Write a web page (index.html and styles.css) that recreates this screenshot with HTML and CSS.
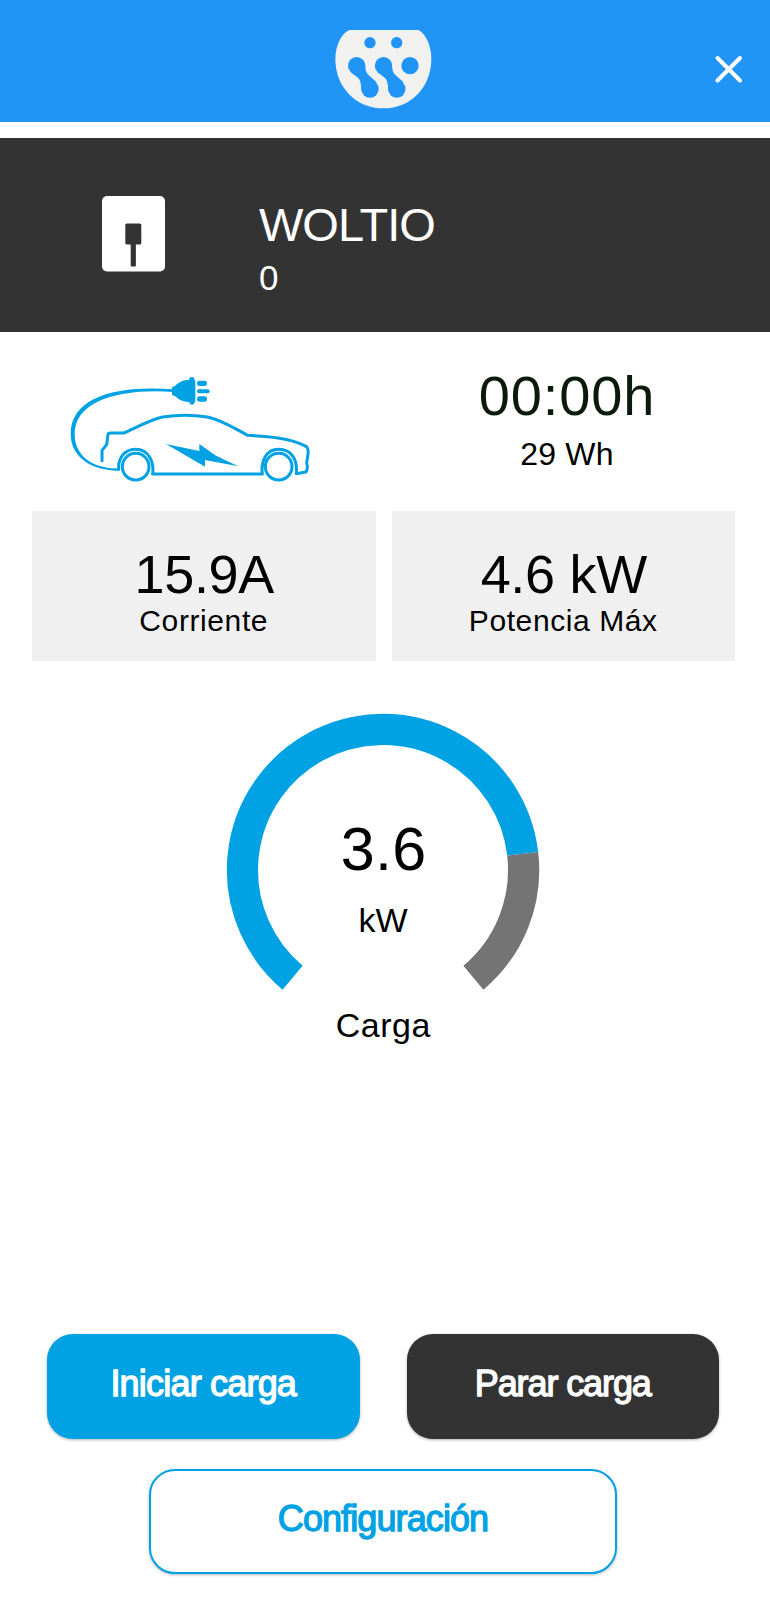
FILE: index.html
```html
<!DOCTYPE html>
<html lang="es">
<head>
    <meta charset="UTF-8">
    <meta name="viewport" content="width=device-width, initial-scale=1.0">
    <title>Woltio</title>
    <link rel="stylesheet" href="styles.css">
</head>
<body>

<header class="header">
    <svg class="logo" viewBox="0 0 450 330">
        <path fill="#f1f1f0" d="M118 60H324C346 68 364 108 364 146C364 232 302 295 220 295S76 232 76 146C76 108 94 70 118 60Z"/>
        <g fill="#2095f6">
            <circle cx="180" cy="98" r="17"/>
            <circle cx="260" cy="98" r="17"/>
            <circle cx="300" cy="167" r="26"/>
            <g id="gota">
                <circle cx="140" cy="167" r="26"/>
                <circle cx="180" cy="237" r="26"/>
                <path d="M165 160C166 180 168 189 178 197L200 217L155 244C153 220 151 209 142 202L122 187Z"/>
            </g>
            <use href="#gota" x="80.500"/>
        </g>
    </svg>
    <svg class="cerrar" viewBox="0 0 30 30">
        <path d="M3.500 4L26 26.500M26 4L3.500 26.500" stroke="#fff" stroke-width="4" stroke-linecap="round"/>
    </svg>
</header>

<section class="cargador">
    <svg class="cargador-icono" viewBox="0 0 64 76">
        <rect width="63" height="75.500" rx="5" fill="#fff"/>
        <rect x="23.300" y="27.500" width="16" height="21" rx="1.500" fill="#333"/>
        <rect x="28.700" y="47" width="5.200" height="23.500" rx="1" fill="#333"/>
    </svg>
    <div>
        <h1 class="nombre">WOLTIO</h1>
        <p class="numero">0</p>
    </div>
</section>

<section class="sesion">
    <svg class="coche" viewBox="0 0 780 390">
        <g fill="none" stroke="#00a2e4" stroke-width="9" stroke-linejoin="round" stroke-linecap="round">
            <path d="M126 287V256L140 239L144 208Q145 204 152 204H192C225 190 265 166 308 156Q375 146 442 156C485 165 520 188 563 211C620 214 690 218 738 244Q744 248 744 256C746 270 740 285 740 296C744 305 741 315 738 321L709 326C713 285 695 253 656 253C618 253 602 290 607 327H278C283 288 264 253 227 253C190 253 174 284 176 313"/>
            <circle cx="227" cy="305" r="40"/>
            <circle cx="656" cy="305" r="40"/>
        </g>
        <g fill="#00a2e4">
            <!-- cable y enchufe -->
            <path d="M340 73C180 61 32 90 32 208C32 270 86 318 178 317V310C95 313 44 270 44 208C44 106 180 70 340 81Z"/>
            <path d="M336 67L346 62C358 51 368 45 387 45C387 38 391 36 396 36C401 36 403 38 403 43L406 50V107L402 117Q396 122 390 117L387 111C368 111 358 105 346 94L336 90Z"/>
            <rect x="411" y="47" width="30" height="16" rx="8"/>
            <rect x="411" y="73" width="38" height="12" rx="6"/>
            <rect x="411" y="94" width="30" height="16" rx="8"/>
            <path d="M318 237L418 258V237L468 272L535 304L435 285V305Z"/>
        </g>
    </svg>
    <div class="sesion-datos">
        <p class="tiempo">00:00h</p>
        <p class="energia">29 Wh</p>
    </div>
</section>

<section class="tarjetas">
    <div class="tarjeta">
        <p class="valor">15.9A</p>
        <p class="etiqueta">Corriente</p>
    </div>
    <div class="tarjeta">
        <p class="valor">4.6 kW</p>
        <p class="etiqueta">Potencia Máx</p>
    </div>
</section>

<svg class="medidor" viewBox="-175 -170 350 360">
    <g fill="none" stroke-width="31.200">
        <path stroke="#00a2e4" d="M-90.400 107.700A140.600 140.600 0 1 1 139.700 -16.200"/>
        <path stroke="#747474" d="M139.700 -16.200A140.600 140.600 0 0 1 90.400 107.700"/>
    </g>
    <text class="medidor-valor" x="0.500" y="-0.500">3.6</text>
    <text class="medidor-unidad" x="0" y="62">kW</text>
    <text class="medidor-titulo" x="0.300" y="167">Carga</text>
</svg>

<div class="acciones">
    <button class="boton iniciar">Iniciar carga</button>
    <button class="boton parar">Parar carga</button>
    <button class="boton configurar">Configuración</button>
</div>

</body>
</html>
```
FILE: styles.css
```css
body {
    margin: 0;
    height: 1600px;
    font-family: 'Liberation Sans', Arial, sans-serif;
    background-color: #fff;
    color: #000;
    overflow: hidden;
}

h1, p {
    margin: 0;
    font-weight: normal;
}

svg {
    display: block;
}

.header {
    display: flex;
    height: 122px;
    box-sizing: border-box;
    padding: 10px 26px 0 310px;
    justify-content: space-between;
    background-color: #2095f6;
}

.logo {
    width: 150px;
    height: 110px;
}

.cerrar {
    width: 30px;
    height: 30px;
    margin-top: 44px;
}

.cargador {
    display: grid;
    grid-template-columns: 157px 1fr;
    height: 193.500px;
    margin-top: 16px;
    padding-left: 102px;
    background-color: #333;
    color: #fff;
}

.cargador-icono {
    width: 64px;
    height: 76px;
    margin-top: 58px;
}

.nombre {
    margin-top: 59px;
    font-size: 47px;
    line-height: 55px;
    letter-spacing: -1px;
}

.numero {
    font-size: 35px;
    line-height: 52px;
}

.sesion {
    display: flex;
    height: 146px;
    padding: 33.500px 0 0 60px;
}

.coche {
    flex: none;
    width: 260px;
    height: 130px;
}

.sesion-datos {
    flex: 1;
    padding: 1px 0 0 44px;
    text-align: center;
}

.tiempo {
    font-size: 56px;
    line-height: 60px;
    letter-spacing: 0.9px;
    color: #0a1a0d;
}

.energia {
    margin-top: 8px;
    font-size: 32px;
    line-height: 40px;
    letter-spacing: 0.2px;
}

.tarjetas {
    display: grid;
    grid-template-columns: 1fr 1fr;
    gap: 16px;
    padding: 0 35px 0 32px;
}

.tarjeta {
    height: 150px;
    box-sizing: border-box;
    padding-top: 35.500px;
    background-color: #f0f0f0;
    text-align: center;
}

.valor {
    padding-left: 1px;
    font-size: 54px;
    line-height: 54px;
    letter-spacing: -0.3px;
}

.etiqueta {
    font-size: 30px;
    line-height: 40px;
    letter-spacing: 0.6px;
}

.medidor {
    width: 350px;
    height: 360px;
    margin: 39px 0 0 208.400px;
}

.medidor text {
    text-anchor: middle;
}

.medidor-valor {
    font-size: 61px;
    letter-spacing: 0.3px;
}

.medidor-unidad {
    font-size: 34px;
}

.medidor-titulo {
    font-size: 34px;
    letter-spacing: 0.5px;
}

.acciones {
    display: flex;
    flex-wrap: wrap;
    justify-content: center;
    gap: 30px 47px;
    margin-top: 274px;
    padding-right: 4px;
}

.boton {
    width: 312.500px;
    height: 105px;
    padding: 0 0 6px;
    border: none;
    border-radius: 26px;
    box-shadow: 0 1px 3px rgba(0, 0, 0, 0.3);
    font-family: inherit;
    font-size: 36px;
    letter-spacing: -0.8px;
    color: #fff;
    -webkit-text-stroke: 1.3px currentColor;
    cursor: pointer;
}

.iniciar {
    background-color: #00a2e4;
}

.parar {
    background-color: #333;
    letter-spacing: -1.1px;
}

.configurar {
    width: 468px;
    border: 2px solid #00a2e4;
    background-color: #fff;
    color: #00a2e4;
    letter-spacing: -0.9px;
}
```
